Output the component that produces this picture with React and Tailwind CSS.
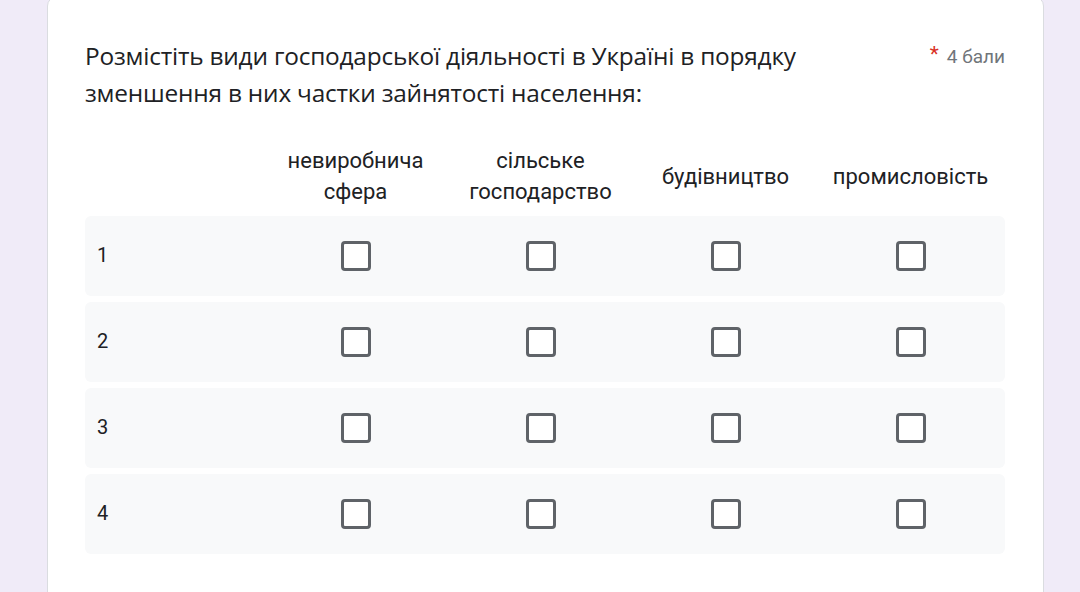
const COLUMNS = [
  ['невиробнича', 'сфера'],
  ['сільське', 'господарство'],
  ['будівництво'],
  ['промисловість'],
]

const ROWS = ['1', '2', '3', '4']

function Box() {
  return <div className="h-[30px] w-[30px] rounded-[4px] border-[3px] border-[#5f6368] bg-white" />
}

export default function App() {
  return (
    <div className="h-[592px] overflow-hidden bg-[#f0ebf8] font-['Roboto',sans-serif]">
      <div className="ml-[47px] mt-[-4px] h-[620px] w-[997px] rounded-[10px] border border-[#dadce0] bg-white pl-[37px] pr-[38px] pt-[40px]">
        {/* TITLE */}
        <div className="flex items-start justify-between">
          <h1 className="w-[780px] font-['Open_Sans','Roboto',sans-serif] text-[24.4px] leading-[37px] tracking-[-0.2px] text-[#202124]">
            Розмістіть види господарської діяльності в Україні в порядку зменшення в них частки зайнятості населення:
          </h1>
          <div className="mt-[7px] flex items-start gap-[8px]">
            <span className="text-[21px] leading-[20px] text-[#d93025]">*</span>
            <span className="text-[19px] leading-[26px] text-[#70757a]">4 бали</span>
          </div>
        </div>

        {/* GRID */}
        <div className="mt-[27px] w-[920px]">
          <div className="flex h-[78px] items-center pb-[2px]">
            <div className="w-[178px]" />
            {COLUMNS.map((c) => (
              <div key={c.join(' ')} className="w-[185px] text-center text-[22px] leading-[31px] text-[#202124]">
                {c.map((line) => (
                  <div key={line}>{line}</div>
                ))}
              </div>
            ))}
          </div>
          <div className="flex flex-col gap-[6px]">
            {ROWS.map((r) => (
              <div key={r} className="flex h-[80px] items-center rounded-[6px] bg-[#f8f9fa]">
                <div className="w-[178px] pb-[2px] pl-[12px] text-[20px] text-[#202124]">{r}</div>
                {COLUMNS.map((c) => (
                  <div key={c.join(' ')} className="flex w-[185px] justify-center">
                    <Box />
                  </div>
                ))}
              </div>
            ))}
          </div>
        </div>
      </div>
    </div>
  )
}
